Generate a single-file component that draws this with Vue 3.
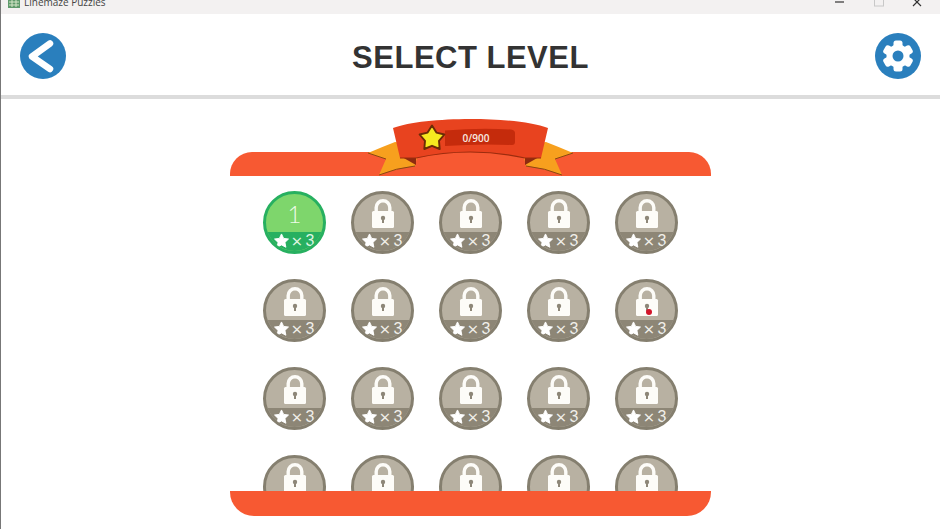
<script setup>
const levels = Array.from({ length: 20 }, (_, i) => ({ id: i + 1, open: i === 0, marked: i === 9 }))
const teeth = [0, 60, 120, 180, 240, 300]
</script>

<template>
  <div class="page">
    <div class="titlebar">
      <div class="title-left">
        <svg class="app-icon" width="12" height="12" viewBox="0 0 12 12">
          <rect width="12" height="12" fill="#5f9a6b" />
          <path d="M1 3h10M1 6h10M1 9h10M4 1v10M8 1v10" stroke="#d6e6c8" stroke-width="1" />
        </svg>
        <span>Linemaze Puzzles</span>
      </div>
      <div class="win-controls">
        <svg width="110" height="14" viewBox="0 0 110 14">
          <path d="M0 2h9" stroke="#333" stroke-width="1.2" />
          <rect x="39.5" y="-3" width="9" height="9" fill="none" stroke="#c8c8c8" />
          <path d="M78 -2l8 8M86 -2l-8 8" stroke="#333" stroke-width="1.2" />
        </svg>
      </div>
    </div>

    <header class="header">
      <svg class="round-btn" viewBox="0 0 46 46" width="46" height="46">
        <circle cx="23" cy="23" r="23" fill="#2a7fbd" />
        <path d="M30 10.5 L12 23.5 L30 36" fill="none" stroke="#fff" stroke-width="6.5" stroke-linecap="round" stroke-linejoin="round" />
      </svg>
      <h1 class="heading">SELECT LEVEL</h1>
      <svg class="round-btn" viewBox="0 0 46 46" width="46" height="46">
        <circle cx="23" cy="23" r="23" fill="#2a7fbd" />
        <circle cx="23" cy="23" r="11.5" fill="#fff" />
        <rect v-for="a in teeth" :key="a" x="18.5" y="7.5" width="9" height="9" rx="2.5" fill="#fff" :transform="`rotate(${a} 23 23)`" />
        <circle cx="23" cy="23" r="5.5" fill="#2a7fbd" />
      </svg>
    </header>
    <div class="divider"></div>

    <section class="panel">
      <div class="bar bar-top"></div>
      <svg class="ribbon" width="220" height="70" viewBox="360 112 220 70">
        <path d="M395 142 Q382 147 368 153 L386 159 L379 175 Q396 168 415 166 L420 145 Z" fill="#f7a01e" />
        <path d="M546 142 Q559 147 573 153 L555 159 L562 175 Q545 168 526 166 L521 145 Z" fill="#f7a01e" />
        <path d="M368 153 L386 159 M379 175 Q396 168 415 166 M573 153 L555 159 M562 175 Q545 168 526 166" fill="none" stroke="#8a4a10" stroke-width="1" />
        <path d="M402 157 L416 158 L416 165 Z" fill="#8f2a10" />
        <path d="M539 157 L525 158 L525 165 Z" fill="#8f2a10" />
        <path d="M393 128 C425 116 516 116 548 128 L541 158 L525 158 Q470 146 416 158 L400 158 Z" fill="#e8431f" />
        <path d="M400 158 L416 158 Q470 146 525 158 L541 158" fill="none" stroke="#9c2c0e" stroke-width="1.2" />
        <path d="M445 130.5 Q480 127.5 511 129.5 Q515 130 515 133 L515 142 Q515 145.5 511 145 Q480 143.5 445 146 Z" fill="#c52b0c" />
        <path d="M432 125.5 L436.4 132.6 L444.4 134.5 L439 140.8 L439.7 149 L432 145.8 L424.3 149 L425 140.8 L419.6 134.5 L427.6 132.6 Z" fill="#f6ea1f" stroke="#6b2c06" stroke-width="1.9" stroke-linejoin="round" />
      </svg>
      <span class="score">0/900</span>

      <div class="viewport">
        <div class="grid">
          <div v-for="lvl in levels" :key="lvl.id" class="level" :class="{ open: lvl.open }">
            <div class="level-top">
              <span v-if="lvl.open" class="num">{{ lvl.id }}</span>
              <svg v-else class="lock" width="24" height="31" viewBox="0 0 24 31">
                <path d="M5.2 14 V9.5 a6.8 6.8 0 0 1 13.6 0 V14" fill="none" stroke="#fdfcf8" stroke-width="3.4" />
                <rect x="1" y="13" width="22" height="17" rx="1.5" fill="#fdfcf8" />
                <circle cx="12" cy="20" r="2.2" fill="#8e8778" />
                <rect x="11" y="20" width="2" height="5" fill="#8e8778" />
              </svg>
              <i v-if="lvl.marked" class="dot"></i>
            </div>
            <div class="level-bottom">
              <svg width="15" height="15" viewBox="0 0 24 24">
                <path d="M12 1.5 L15.4 8.6 L23.2 9.6 L17.5 15 L19 22.8 L12 19 L5 22.8 L6.5 15 L0.8 9.6 L8.6 8.6 Z" fill="#fff" stroke="#fff" stroke-width="1.5" stroke-linejoin="round" />
              </svg>
              <span class="times">×</span>
              <span class="count">3</span>
            </div>
          </div>
        </div>
      </div>
      <div class="bar bar-bottom"></div>
    </section>
  </div>
</template>

<style scoped>
.page {
  width: 940px;
  height: 529px;
  overflow: hidden;
  background: #fff;
  position: relative;
  box-sizing: border-box;
  border-left: 1px solid #777;
  font-family: "Open Sans", "Liberation Sans", sans-serif;
}
.titlebar {
  height: 14px;
  background: #f3f1f1;
  margin-left: -1px;
  display: flex;
  justify-content: space-between;
  overflow: hidden;
}
.title-left {
  display: flex;
  align-items: flex-start;
  gap: 4px;
  padding-left: 8px;
  margin-top: -5px;
  font-size: 10px;
  line-height: 14px;
  color: #444;
}
.app-icon { margin-top: 1px; }
.win-controls { width: 110px; margin-right: -5px; }
.win-controls svg { display: block; }
.header {
  height: 78px;
  padding: 3px 19px 0 19px;
  display: flex;
  align-items: center;
  justify-content: space-between;
}
.round-btn { flex: none; }
.heading {
  margin: 4px 0 0;
  font-family: "Liberation Sans", Arial, sans-serif;
  font-size: 31px;
  font-weight: 700;
  letter-spacing: 0.5px;
  color: #333;
}
.divider { height: 4px; margin-left: -1px; background: #dcdcdc; }
.panel {
  position: relative;
  width: 481px;
  margin: 53px 0 0 229px;
}
.bar { height: 24px; background: #f75932; }
.bar-top { border-radius: 22px 22px 0 0; }
.bar-bottom { border-radius: 0 0 24px 24px; height: 25px; }
.ribbon {
  position: absolute;
  left: 130px;
  top: -40px;
}
.score {
  position: absolute;
  left: 216px;
  top: -21px;
  width: 60px;
  text-align: center;
  font-size: 10px;
  font-weight: 600;
  line-height: 14px;
  color: #f7e9e0;
}
.viewport { height: 315px; overflow: hidden; }
.grid {
  padding: 15px 0 0 33px;
  display: grid;
  grid-template-columns: repeat(5, 63px);
  grid-auto-rows: 63px;
  gap: 25px;
}
.level {
  position: relative;
  box-sizing: border-box;
  width: 63px;
  height: 63px;
  border: 3px solid #857f6f;
  border-radius: 50%;
  overflow: hidden;
  display: flex;
  flex-direction: column;
  background: #b8b1a2;
}
.level.open { border-color: #27b060; background: #7ed66c; }
.level-top {
  position: relative;
  height: 38px;
  display: flex;
  justify-content: center;
  align-items: flex-end;
}
.lock { display: block; margin-bottom: 3px; flex: none; }
.num {
  font-family: "Lato", "Open Sans", sans-serif;
  font-weight: 300;
  font-size: 24px;
  line-height: 36px;
  color: #eefbe8;
}
.dot {
  position: absolute;
  left: 27.5px;
  top: 27px;
  width: 6px;
  height: 6px;
  border-radius: 50%;
  background: #d2152a;
}
.level-bottom {
  flex: 1;
  background: #8d8676;
  display: flex;
  align-items: flex-start;
  justify-content: center;
  gap: 3px;
  padding-top: 1px;
  padding-right: 1px;
}
.level.open .level-bottom { background: #27b060; }
.times {
  font-size: 19px;
  line-height: 16px;
  color: #f1efe9;
}
.count {
  font-family: "Liberation Sans", Arial, sans-serif;
  font-size: 16px;
  line-height: 16px;
  color: #f1efe9;
}
.level.open .times,
.level.open .count { color: #dff5e0; }
</style>
